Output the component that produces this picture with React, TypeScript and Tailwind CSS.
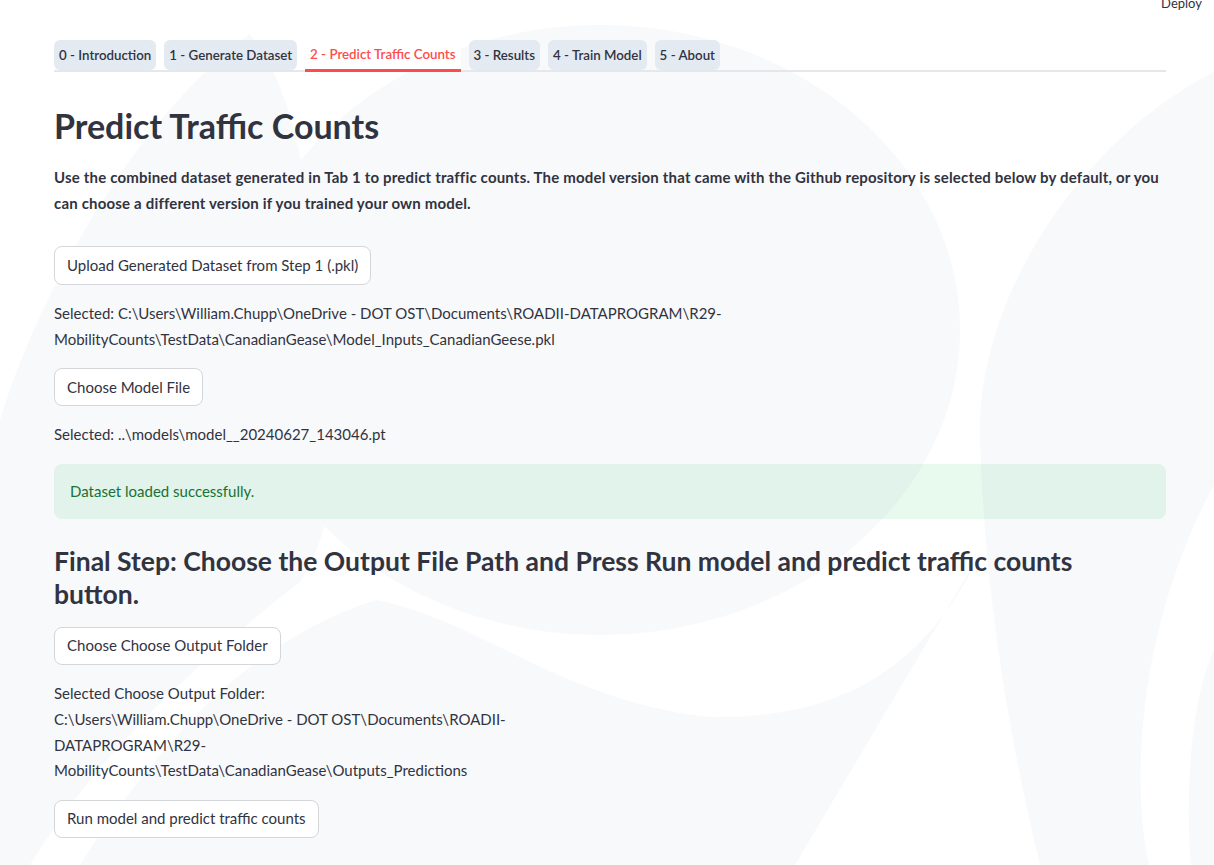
import React from "react";

const tabs = [
  "0 - Introduction",
  "1 - Generate Dataset",
  "2 - Predict Traffic Counts",
  "3 - Results",
  "4 - Train Model",
  "5 - About",
];
const ACTIVE = 2;

// faint watermark shapes behind the page
const Backdrop = () => (
  <svg
    className="absolute inset-0 pointer-events-none"
    width="1214"
    height="865"
    viewBox="0 0 1214 865"
  >
    <g fill="#f8f9fb">
      <ellipse cx="600" cy="330" rx="360" ry="305" />
      <path d="M0 420 C30 320 120 130 250 34 C330 140 300 300 330 420 C340 500 320 550 300 582 C200 660 100 750 30 865 L0 865 Z" />
      <path d="M80 865 C160 740 250 640 376 600 C480 620 560 700 708 717 C850 720 930 660 982 550 L795 865 Z" />
      <path d="M1214 72 C1080 140 975 300 980 440 C985 600 1010 740 1040 865 L1149 865 C1130 780 1140 620 1214 485 Z" />
      <path d="M1214 650 C1190 700 1185 800 1191 865 L1214 865 Z" />
    </g>
  </svg>
);

const Button = ({ children, tall }: { children: React.ReactNode; tall?: boolean }) => (
  <button
    className={
      (tall ? "h-[39px] " : "h-[38px] ") +
      "self-start px-3 rounded-lg border border-[#d5d6da] bg-white text-[15px] leading-[25.6px] text-[#31333f]"
    }
  >
    {children}
  </button>
);

export default function App() {
  return (
    <div
      className="relative w-full h-[865px] overflow-hidden bg-white text-[#31333f]"
      style={{ fontFamily: "Lato, 'Noto Sans', sans-serif" }}
    >
      <Backdrop />
      <div className="absolute top-[-7px] right-[12px] text-[13px] leading-5">
        Deploy
      </div>

      <div className="relative ml-[54px] w-[1112px] flex flex-col">
        {/* tab strip */}
        <div className="mt-[40px] flex items-start gap-2 border-b-2 border-[#e6e7ea]">
          {tabs.map((t, i) => (
            <div
              key={t}
              className={
                i === ACTIVE
                  ? "h-[32px] px-[5px] pt-[1px] -mb-[2px] flex items-center rounded-t-md bg-white border-b-[3px] border-[#ff4b4b] text-[#ff4b4b] text-[13.3px] font-semibold"
                  : "h-[30px] px-[5px] pt-[2px] flex items-center rounded-md bg-[#e4eaf2] text-[13.3px] font-semibold"
              }
            >
              {t}
            </div>
          ))}
        </div>

        <h1 className="mt-[32px] text-[34px] leading-[43px] font-bold">
          Predict Traffic Counts
        </h1>

        <p className="mt-[18px] text-[15px] leading-[25.6px] font-bold tracking-[0.18px]">
          Use the combined dataset generated in Tab 1 to predict traffic counts. The model version that came with the Github repository is selected below by default, or you
          <br />
          can choose a different version if you trained your own model.
        </p>

        <div className="mt-[30px] flex flex-col gap-4">
          <Button tall>Upload Generated Dataset from Step 1 (.pkl)</Button>

          <p className="text-[15px] leading-[25.6px]">
            Selected: C:\Users\William.Chupp\OneDrive - DOT OST\Documents\ROADII-DATAPROGRAM\R29-
            <br />
            MobilityCounts\TestData\CanadianGease\Model_Inputs_CanadianGeese.pkl
          </p>

          <Button>Choose Model File</Button>

          <p className="text-[15px] leading-[25.6px]">
            Selected: ..\models\model__20240627_143046.pt
          </p>

          <div className="h-[55px] px-4 flex items-center rounded-lg bg-[rgba(33,195,84,0.1)] text-[#177233] text-[15px]">
            Dataset loaded successfully.
          </div>
        </div>

        <h3 className="mt-[26px] text-[26.5px] leading-[33px] font-bold">
          Final Step: Choose the Output File Path and Press Run model and predict traffic counts
          <br />
          button.
        </h3>

        <div className="mt-4 flex flex-col gap-4">
          <Button>Choose Choose Output Folder</Button>

          <p className="text-[15px] leading-[25.8px]">
            Selected Choose Output Folder:
            <br />
            C:\Users\William.Chupp\OneDrive - DOT OST\Documents\ROADII-
            <br />
            DATAPROGRAM\R29-
            <br />
            MobilityCounts\TestData\CanadianGease\Outputs_Predictions
          </p>

          <Button>Run model and predict traffic counts</Button>
        </div>
      </div>
    </div>
  );
}
